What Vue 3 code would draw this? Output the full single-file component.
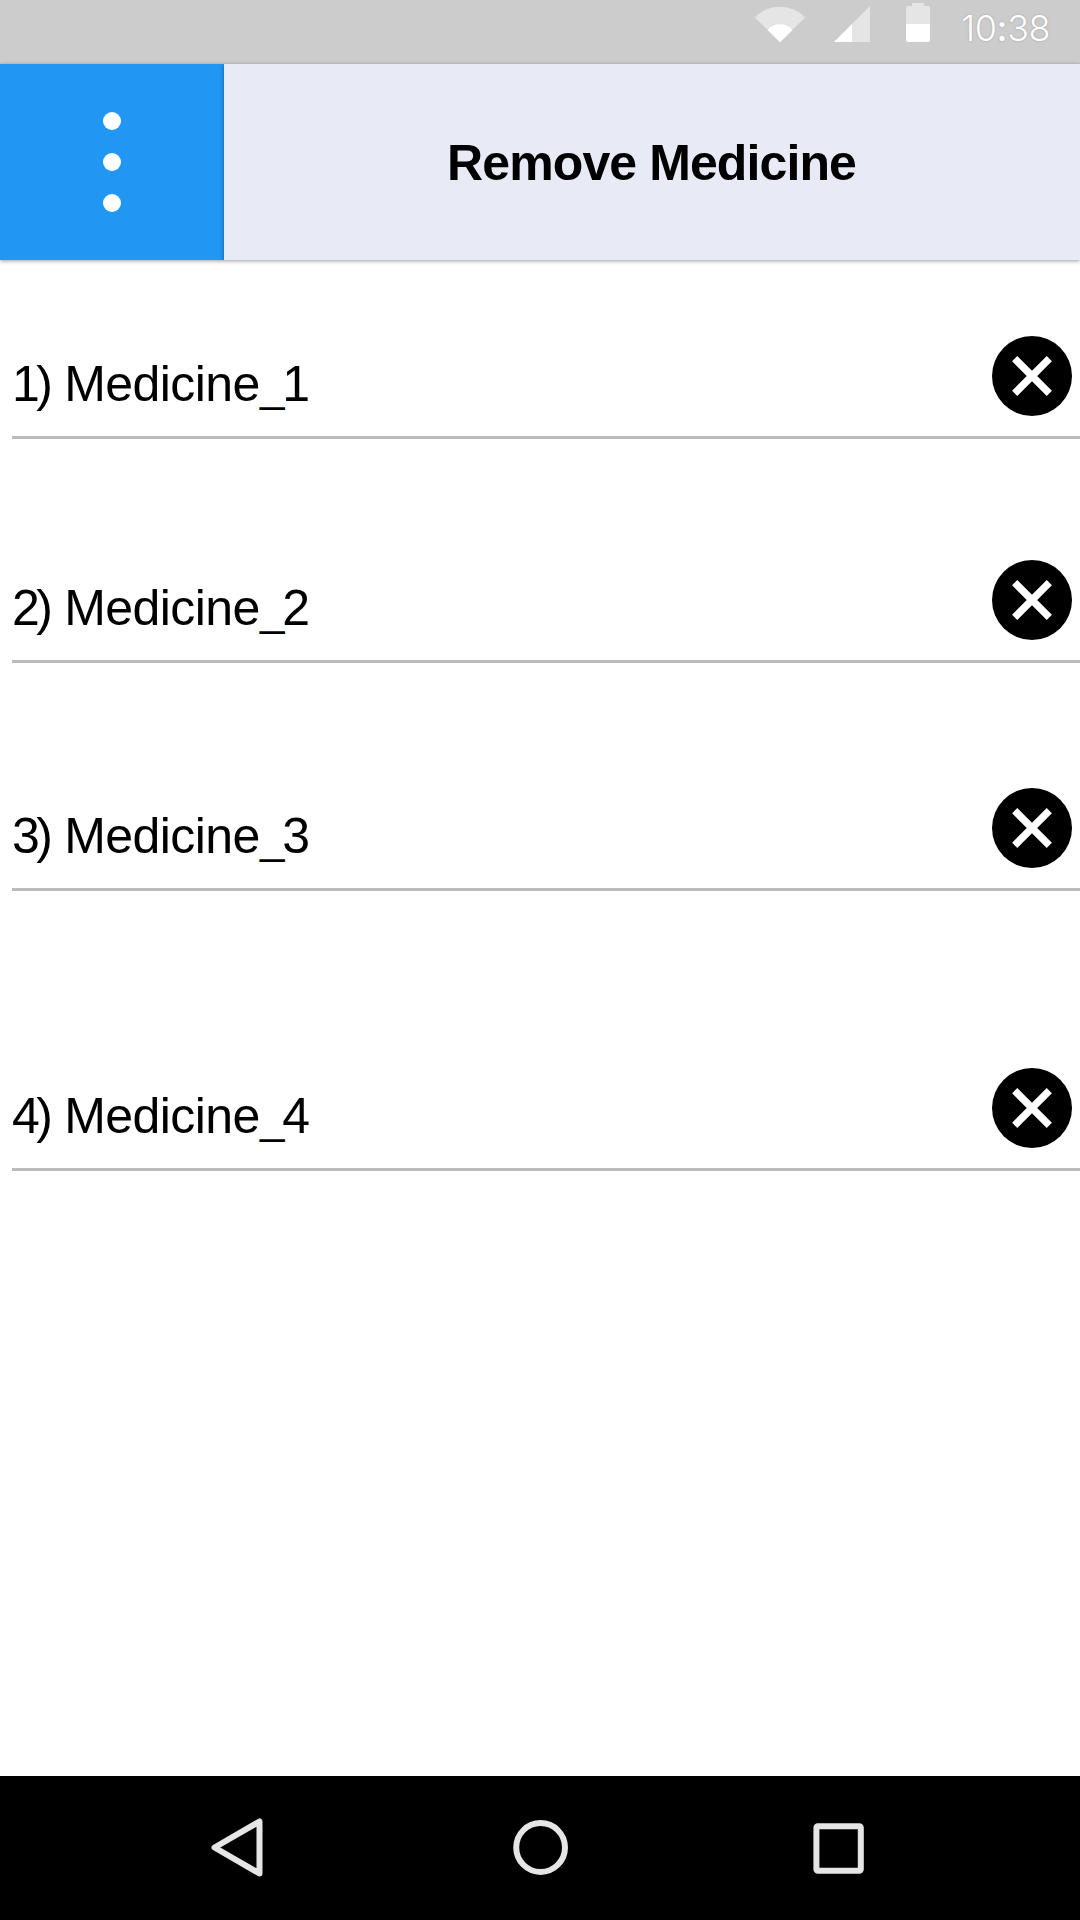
<script setup>
const medicines = [
  { id: 1, height: 179 },
  { id: 2, height: 224 },
  { id: 3, height: 228 },
  { id: 4, height: 280 },
]
</script>

<template>
  <div class="screen">
    <div class="status">
      <svg class="indicators" width="200" height="64" viewBox="740 0 200 64">
        <path d="M780 42.3 754.8 17.4Q765 6.8 780 6.8T805.2 17.4Z" fill="#e5e5e5" />
        <path d="M780 42.3 767.6 30Q772 24.2 780 24.2T792.4 30Z" fill="#fff" />
        <path d="M834 42H870V6Z" fill="#e5e5e5" />
        <path d="M834 42H852V24Z" fill="#fff" />
        <path d="M906 24V8q0-2 2-2h4V3h12v3h4q2 0 2 2v16Z" fill="#e5e5e5" />
        <path d="M906 24h24v16q0 2-2 2h-20q-2 0-2-2Z" fill="#fff" />
      </svg>
      <span class="time">10<span class="colon">:</span>38</span>
    </div>

    <header class="header">
      <button class="menu" aria-label="Menu">
        <i></i><i></i><i></i>
      </button>
      <h1 class="title">Remove Medicine</h1>
    </header>

    <ul class="list">
      <li v-for="m in medicines" :key="m.id" class="row" :style="{ height: m.height + 'px' }">
        <span class="name"><span class="index">{{ m.id }})</span> <span class="word">Medicine</span><span class="suffix">_</span>{{ m.id }}</span>
        <svg class="remove" width="80" height="80" viewBox="-40 -40 80 80">
          <circle r="40" />
          <path d="M-17.3-17.3 17.3 17.3M17.3-17.3-17.3 17.3" stroke="#fff" stroke-width="7.3" />
        </svg>
      </li>
    </ul>

    <nav class="nav">
      <svg width="1080" height="144" viewBox="0 1776 1080 144" fill="none" stroke="#e5e5e5" stroke-width="6" stroke-linejoin="round">
        <path d="M214.5 1847.5 259.5 1821.5V1873.5Z" />
        <circle cx="540.6" cy="1847.5" r="24.4" />
        <rect x="816.4" y="1826.3" width="44.4" height="44.4" rx="1.5" />
      </svg>
    </nav>
  </div>
</template>

<style>
body {
  margin: 0;
}
</style>

<style scoped>
.screen {
  width: 1080px;
  height: 1920px;
  display: flex;
  flex-direction: column;
  overflow: hidden;
  background: #fff;
  color: #000;
  font-family: "Liberation Sans", Arial, sans-serif;
}
.status {
  height: 64px;
  display: flex;
  justify-content: flex-end;
  background: #ccc;
}
.time {
  width: 140px;
  box-sizing: border-box;
  padding-left: 21px;
  font: 300 36px/56px Inter, sans-serif;
  letter-spacing: -0.4px;
  color: #fff;
  text-shadow: 0 0 2px rgba(0, 0, 0, 0.25);
}
.colon {
  font-weight: 500;
}
.header {
  height: 196px;
  display: flex;
}
.menu {
  width: 224px;
  padding: 0;
  border: 0;
  display: flex;
  flex-direction: column;
  align-items: center;
  justify-content: center;
  gap: 23px;
  background: #2196f3;
  box-shadow: 0 1px 4px rgba(0, 0, 0, 0.4);
}
.menu i {
  width: 18px;
  height: 18px;
  border-radius: 50%;
  background: #fff;
}
.title {
  position: relative;
  box-sizing: border-box;
  flex: 1;
  height: 196px;
  margin: 0;
  padding-right: 1px;
  text-align: center;
  font-size: 50px;
  line-height: 198px;
  letter-spacing: -0.9px;
  background: #e8eaf6;
  box-shadow: 0 1px 4px rgba(0, 0, 0, 0.4);
}
.list {
  flex: 1;
  margin: 0;
  padding: 0 0 0 12px;
  list-style: none;
}
.row {
  box-sizing: border-box;
  display: flex;
  align-items: flex-end;
  justify-content: space-between;
  padding-right: 8px;
  border-bottom: 3px solid #bbb;
}
.name {
  height: 80px;
  margin-bottom: 12px;
  line-height: 80px;
  font-size: 50px;
  white-space: pre;
  letter-spacing: -1px;
}
.index {
  margin-right: 2px;
  letter-spacing: -3.6px;
}
.word {
  letter-spacing: -0.55px;
}
.suffix {
  font-size: 44px;
  letter-spacing: -2px;
}
.remove {
  margin-bottom: 20px;
}
.nav {
  height: 144px;
  background: #000;
}
.nav svg {
  display: block;
}
</style>
